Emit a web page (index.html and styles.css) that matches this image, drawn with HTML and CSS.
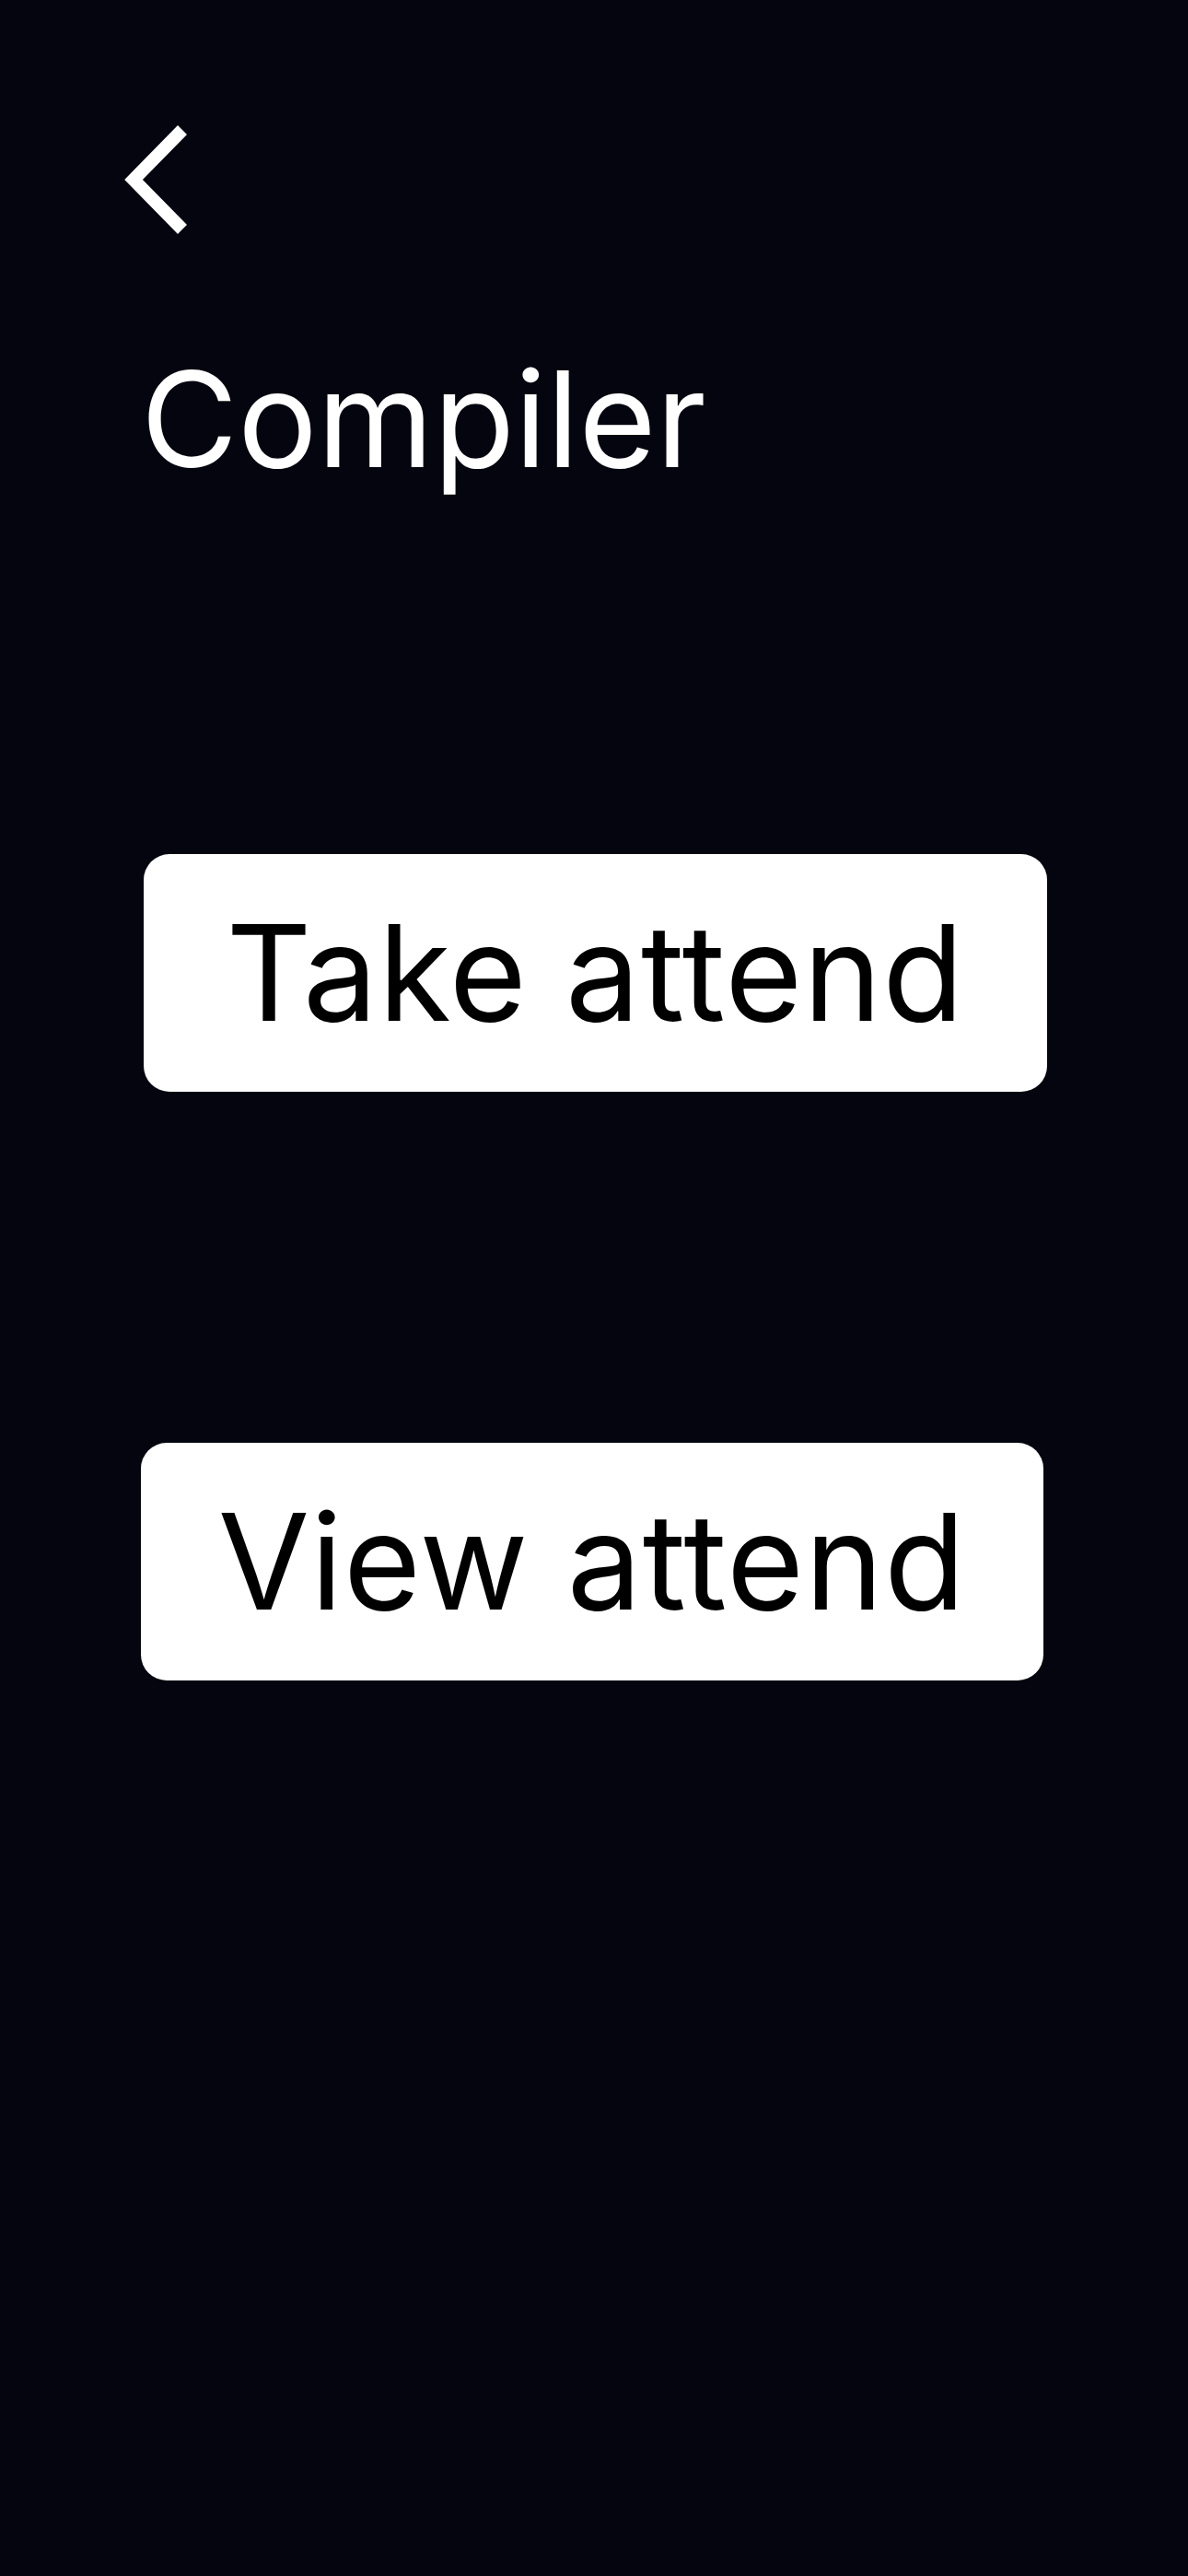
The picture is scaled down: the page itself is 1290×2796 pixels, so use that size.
FILE: index.html
```html
<!DOCTYPE html>
<html lang="en">
<head>
<meta charset="utf-8">
<title>Compiler</title>
<link rel="stylesheet" href="styles.css">
</head>
<body>
<main class="screen">
  <header class="topbar">
    <button class="back" aria-label="Back">
      <svg width="80" height="130" viewBox="0 0 80 130">
        <polyline points="68,11 15,65 68,119" fill="none" stroke="#ffffff" stroke-width="14" stroke-linejoin="miter" stroke-linecap="butt"/>
      </svg>
    </button>
  </header>
  <h1 class="title">Compiler</h1>
  <div class="actions">
    <button class="action action--take">Take attend</button>
    <button class="action action--view">View attend</button>
  </div>
</main>
</body>
</html>
```

FILE: styles.css
```css
html, body {
  margin: 0;
  padding: 0;
  background: #05050f;
}

.screen {
  width: 1290px;
  min-height: 2796px;
  background: #05050f;
  font-family: Inter, "Noto Sans", sans-serif;
  padding-top: 130px;
  box-sizing: border-box;
}

.topbar {
  display: flex;
  padding-left: 130px;
}

.back {
  display: block;
  padding: 0;
  margin: 0;
  border: 0;
  background: none;
  width: 80px;
  height: 130px;
}

.back svg {
  display: block;
}

.title {
  margin: 123px 0 0 0;
  padding-left: 153px;
  color: #ffffff;
  font-size: 144px;
  font-weight: 400;
  line-height: 1;
}

.actions {
  display: flex;
  flex-direction: column;
  align-items: flex-start;
  margin-top: 400px;
  gap: 381px;
}

.action {
  display: flex;
  align-items: center;
  justify-content: center;
  height: 258px;
  width: 981px;
  background: #ffffff;
  border: 0;
  border-radius: 28px;
  color: #000000;
  font-family: Inter, "Noto Sans", sans-serif;
  font-size: 144px;
  font-weight: 400;
  line-height: 1;
  letter-spacing: 1px;
  padding: 0;
}

.action--take {
  margin-left: 156px;
}

.action--view {
  margin-left: 153px;
  width: 980px;
}
```
